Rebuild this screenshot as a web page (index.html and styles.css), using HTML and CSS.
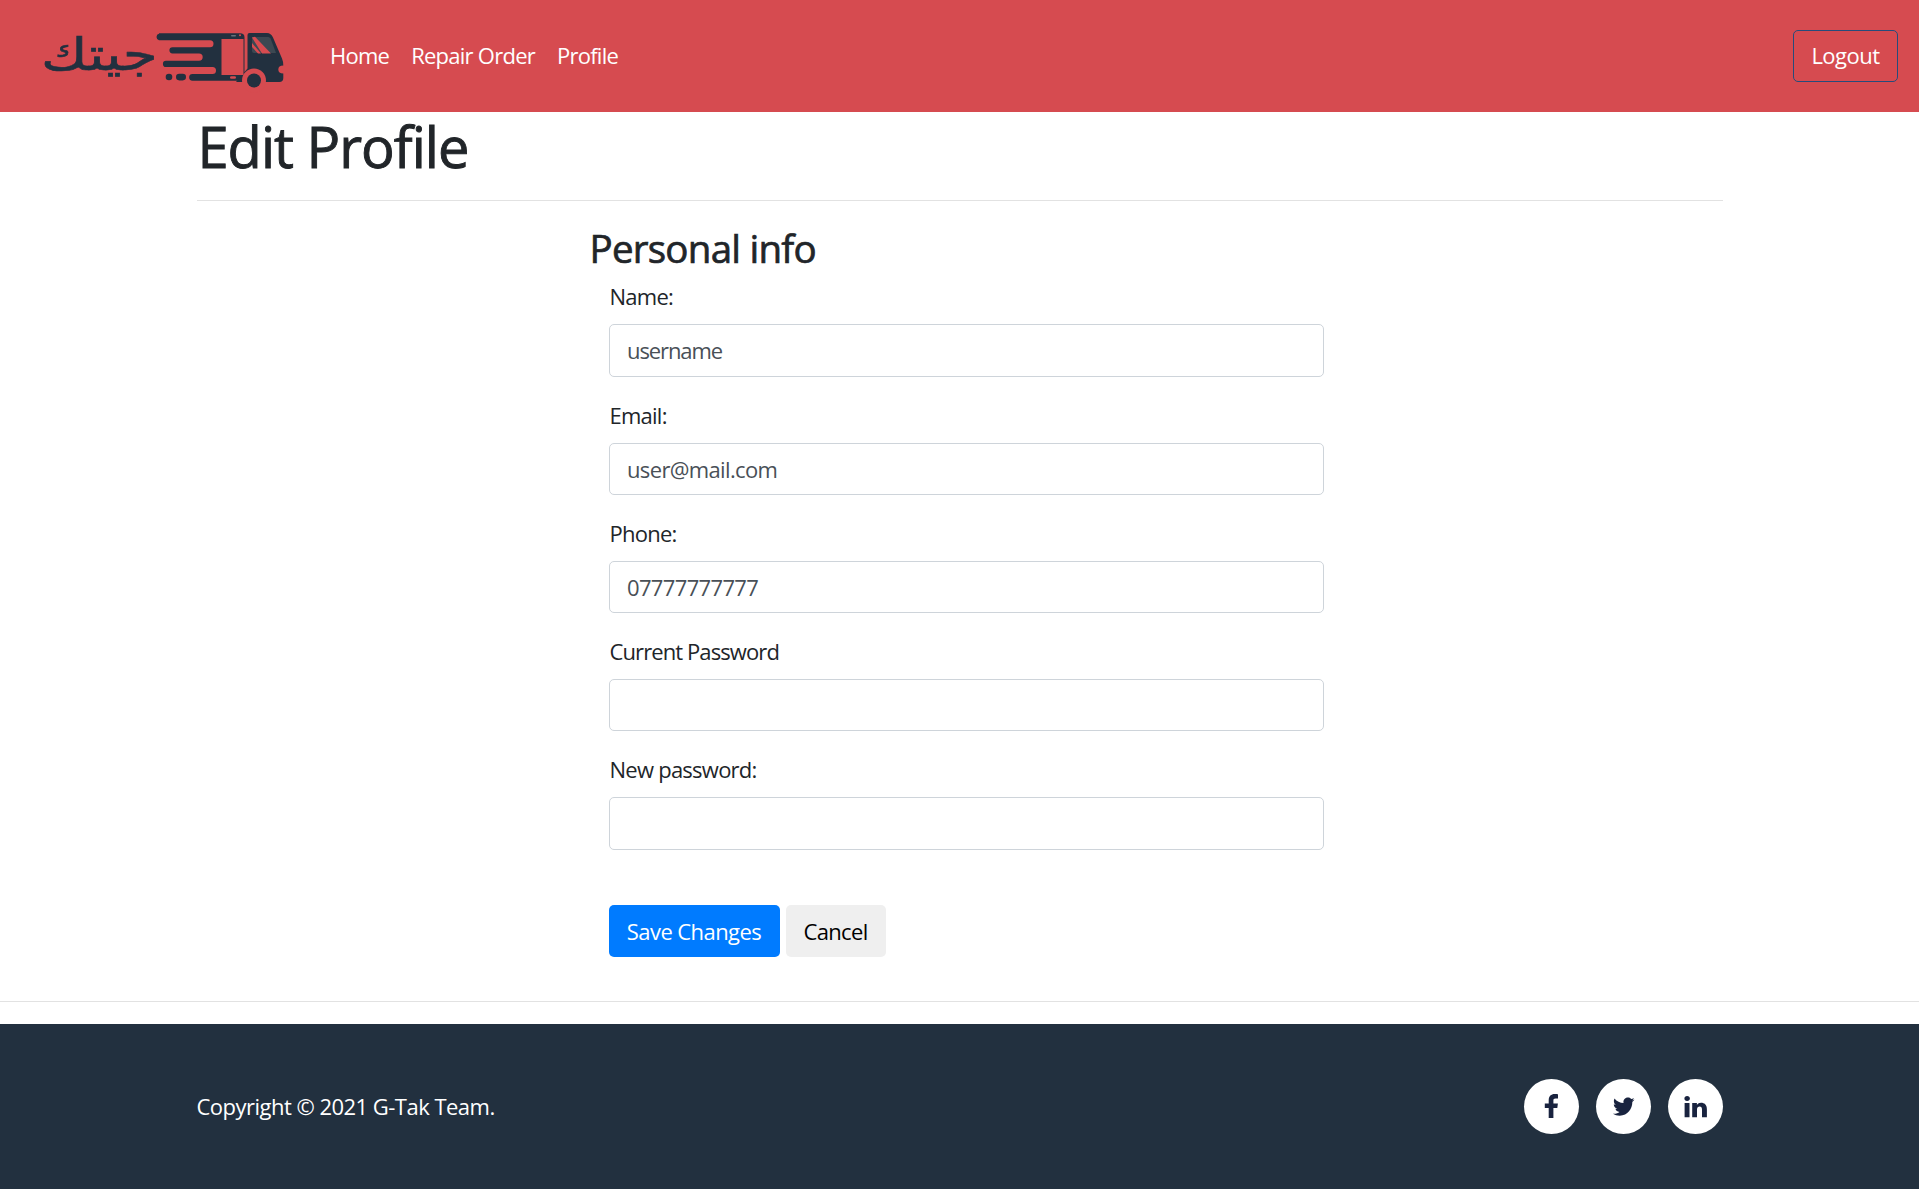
FILE: index.html
```html
<!DOCTYPE html>
<html lang="en">
<head>
<meta charset="utf-8">
<title>Edit Profile</title>
<link rel="stylesheet" href="styles.css">
</head>
<body>
<header class="navbar">
  <a class="brand" href="#" aria-label="G-Tak">
    <svg class="logo" viewBox="0 0 270 80" width="270" height="80">
      <text class="logo-text" transform="translate(11 49.500) scale(1.18 1.03)" x="0" y="0" textLength="99" lengthAdjust="spacingAndGlyphs">جيتك</text>
      <g fill="#22303f">
        <path d="M129 13.300H210q4.500 0 4.500 4V57q0 3.700-4.500 3.700H162.500a3.200 3.200 0 0 1 0-6.700H182.500a3.400 3.400 0 0 0 0-7H136a3.100 3.100 0 0 1 0-6.200H169a3.700 3.700 0 0 0 0-7.400H142.500a3.100 3.100 0 0 1 0-6.200H180a3.500 3.500 0 0 0 0-7H129a3.300 3.300 0 0 1 0-6.400Z"/>
        <circle cx="139" cy="57" r="3.300"/>
        <rect x="146" y="53.800" width="10" height="6.600" rx="3.300"/>
        <path d="M219.500 13H237q4 0 6 4.500L252 38.500q1.300 3 1.300 7-5 0-5 4t5 4V58q0 4-4 4H206L217.500 48.500V15q0-2 2-2Z"/>
      </g>
      <rect x="191.500" y="19" width="22" height="36" fill="#d64b50"/>
      <rect x="200" y="56.200" width="6" height="2.600" rx="1.300" fill="#d64b50"/>
      <rect x="201" y="15" width="5" height="1.600" rx=".8" fill="#68717b"/>
      <circle cx="210" cy="15.300" r="1" fill="#d64b50"/>
      <path d="M222 17H238.500l2 1.200L246 33H224q-2 0-2-2Z" fill="#3c4852"/>
      <path d="M222 17.500 225 16.800 241 33.500H232ZM222 23 231 33.500H228L222 27Z" fill="#d64b50"/>
      <circle cx="224" cy="60.500" r="12" fill="#d64b50"/>
      <circle cx="224" cy="60.500" r="7" fill="#22303f"/>
    </svg>
  </a>
  <nav class="links">
    <a href="#">Home</a>
    <a href="#">Repair Order</a>
    <a href="#">Profile</a>
  </nav>
  <a class="btn btn-logout" href="#">Logout</a>
</header>

<main class="container">
  <h1>Edit Profile</h1>
  <hr>
  <section class="personal">
    <h3>Personal info</h3>
    <form class="form">
      <label for="name">Name:</label>
      <input id="name" class="tight" type="text" value="username">
      <label for="email">Email:</label>
      <input id="email" type="text" value="user@mail.com">
      <label for="phone">Phone:</label>
      <input id="phone" type="text" value="07777777777">
      <label for="current" class="label-long">Current Password</label>
      <input id="current" type="password">
      <label for="new">New password:</label>
      <input id="new" type="password">
      <div class="actions">
        <button class="btn btn-primary" type="button">Save Changes</button>
        <button class="btn btn-cancel" type="reset">Cancel</button>
      </div>
    </form>
  </section>
</main>
<hr class="divider">
<footer class="footer">
  <div class="container footer-row">
    <p class="copyright">Copyright © 2021 G-Tak Team.</p>
    <div class="social">
      <a href="#" aria-label="Facebook"><svg viewBox="0 0 55 55"><path d="M34 15.300v4.100h-2.400c-1.900 0-2.200.9-2.200 2.200v3h4.500l-.6 4.500h-3.900V39h-4.700v-9.900h-3.900v-4.500h3.900v-3.400c0-3.900 2.400-6.100 5.900-6.100 1.600 0 3 .1 3.400.2Z"/></svg></a>
      <a href="#" aria-label="Twitter"><svg viewBox="0 0 55 55"><path d="M38.500 20.600a9 9 0 0 1-2.200 2.300v.6c0 5.900-4.400 13.200-12.600 13.200-2.500 0-4.800-.7-6.800-2 3 .3 5-.6 6.600-1.800-2-.1-3.600-1.400-4.100-3.100h2c-2.500-.7-3.600-2.500-3.600-4.500l2 .6c-2-1.500-2.500-4.300-1.300-6.500 2.300 2.800 5.500 4.500 9.100 4.700-.8-3 1.400-5.500 4.300-5.500 1.300 0 2.400.5 3.200 1.400 1-.2 1.900-.6 2.800-1.100-.3 1-1 1.900-1.900 2.500.9-.1 1.700-.4 2.500-.8Z"/></svg></a>
      <a href="#" aria-label="LinkedIn"><svg viewBox="0 0 55 55"><path d="M16.600 24.100h4.900V38.200h-4.900ZM19.100 17c1.700 0 2.800 1.100 2.800 2.500s-1.100 2.500-2.800 2.500-2.700-1.100-2.700-2.500 1.100-2.500 2.700-2.500ZM24.200 38.200V24.100h4.700v2c.6-.9 1.700-2.300 4.200-2.300 3.200 0 5.800 2 5.800 6.400v8h-4.900v-7.500c0-1.900-.7-3.100-2.400-3.100-1.300 0-2.100.8-2.400 1.600-.1.300-.2.700-.2 1.200v7.800Z"/></svg></a>
    </div>
  </div>
</footer>
</body>
</html>
```
FILE: styles.css
```css
* { box-sizing: border-box; }
body {
  margin: 0;
  background: #fff;
  color: #212529;
  font: 400 22px/33px "Open Sans", "Noto Sans", sans-serif;
  letter-spacing: -0.65px;
}
a { color: inherit; text-decoration: none; }
hr { margin: 0; border: 0; border-top: 1px solid #e2e2e2; }
.navbar {
  display: flex;
  align-items: center;
  height: 112px;
  padding: 0 21px 0 30px;
  background: #d64b50;
  color: #fff;
}
.brand { display: flex; margin-top: 8px; }
.logo { display: block; overflow: visible; }
.logo-text {
  font: 400 44px "DejaVu Sans", sans-serif;
  letter-spacing: 0;
  fill: #22303f;
  stroke: #22303f;
  stroke-width: .6px;
}
.links { display: flex; gap: 22px; margin-left: 30px; padding-bottom: 1px; letter-spacing: -.75px; }
.btn {
  height: 52px;
  padding: 0;
  border: 1px solid transparent;
  border-radius: 5px;
  font: inherit;
  letter-spacing: inherit;
  line-height: 50px;
  text-align: center;
  white-space: nowrap;
}
.btn-logout { width: 105px; margin-left: auto; border-color: #264b7b; line-height: 49px; letter-spacing: -.5px; }
.container { width: 1526px; margin: 0 auto; }
h1, h3 { font-weight: 500; -webkit-text-stroke: .9px currentColor; }
h1 { margin: 0; height: 88px; padding: 1px 0 0 1px; font-size: 56px; line-height: 67px; letter-spacing: -1px; }
.personal { width: 734px; margin-left: 393px; padding-top: 24px; }
h3 { margin: 0 0 8px; font-size: 38.500px; line-height: 46px; letter-spacing: -.75px; -webkit-text-stroke-width: .7px; }
.form { display: flex; flex-direction: column; padding: .3px 0 0 19px; }
label { height: 33px; margin-bottom: 12px; padding: 1px 0 0 1px; letter-spacing: -.75px; }
.label-long { letter-spacing: -.9px; }
input {
  width: 715px;
  height: 52.400px;
  margin: 0 0 20.850px;
  padding: 0 17.500px;
  border: 1px solid #ced4da;
  border-radius: 5px;
  background: #fff;
  color: #495057;
  font: inherit;
  letter-spacing: inherit;
}
.tight { letter-spacing: -1.100px; }
.actions { display: flex; gap: 6px; margin-top: 34.450px; }
.btn-primary { width: 171px; background: #007bff; color: #fff; letter-spacing: -.57px; }
.btn-cancel { width: 100px; background: #efefef; color: #000; }
.divider { margin: 44px 0 22px; }
.footer { height: 165px; background: #22303f; color: #fff; }
.footer-row { display: flex; align-items: center; justify-content: space-between; height: 165px; }
.copyright { margin: 0; letter-spacing: -.52px; }
.social { display: flex; gap: 17px; }
.social a { width: 55px; height: 55px; border-radius: 50%; background: #fff; }
.social svg { display: block; width: 55px; height: 55px; fill: #19233f; }
```
